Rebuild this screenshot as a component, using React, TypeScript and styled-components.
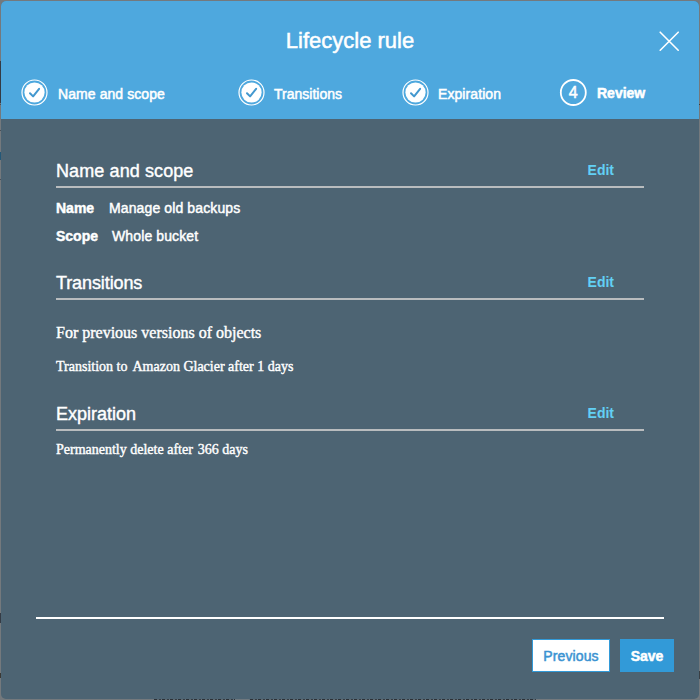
import React from "react";
import styled, { createGlobalStyle } from "styled-components";

const Global = createGlobalStyle`
  * { box-sizing: border-box; }
  html, body { margin: 0; padding: 0; }
  body { width: 700px; height: 700px; overflow: hidden; background: #74797d; }
`;

const Backdrop = styled.div`
  width: 700px;
  height: 700px;
  padding: 1px;
  font-family: "Liberation Sans", Arial, sans-serif;
  color: #fff;
  background:
    linear-gradient(#343b45, #343b45) 0 61px / 1px 42px no-repeat,
    linear-gradient(#4a5058, #4a5058) 0 104px / 1px 1px no-repeat,
    linear-gradient(#4a5058, #4a5058) 0 130px / 1px 1px no-repeat,
    linear-gradient(#235878, #235878) 0 152px / 1px 8px no-repeat,
    linear-gradient(#4a5058, #4a5058) 0 179px / 1px 1px no-repeat,
    linear-gradient(#343b45, #343b45) 0 613px / 1px 10px no-repeat,
    linear-gradient(#3a3834, #3a3834) 0 673px / 1px 5px no-repeat,
    linear-gradient(#363b40, #363b40) 699px 104px / 1px 1px no-repeat,
    linear-gradient(#3a3f44, #3a3f44) 699px 671px / 1px 8px no-repeat,
    linear-gradient(#6f787e, #6f787e) 235px 699px / 14px 1px no-repeat,
    repeating-linear-gradient(90deg, #2c3137 0 3px, #5d686f 3px 5px, #353c43 5px 7px, #64717a 7px 8px) 154px 699px / 382px 1px no-repeat,
    #74797d;
`;

const Dialog = styled.section`
  width: 698px;
  height: 698px;
  display: flex;
  flex-direction: column;
  border-radius: 5px;
  overflow: hidden;
  background: #4d6473;
`;

const Header = styled.header`
  height: 118px;
  flex: none;
  background: #4ea8de;
`;

const TitleBar = styled.div`
  height: 78px;
  padding-top: 2px;
  display: grid;
  grid-template-columns: 60px 1fr 60px;
  align-items: center;
  justify-items: center;
`;

const Title = styled.h1`
  grid-column: 2;
  margin: 0;
  font-size: 22px;
  line-height: 26px;
  font-weight: 400;
  -webkit-text-stroke: 0.5px #fff;
`;

const CloseButton = styled.button`
  display: flex;
  width: 22px;
  height: 22px;
  padding: 0;
  border: 0;
  background: none;
`;

const Steps = styled.ol`
  display: grid;
  grid-template-columns: 217px 164px 157px 1fr;
  margin: 0;
  padding: 0 0 0 20px;
  list-style: none;
`;

const Step = styled.li`
  display: flex;
  align-items: center;
  height: 28px;
`;

const Label = styled.span<{ $gap: number; $space?: number }>`
  margin-left: ${(p) => p.$gap}px;
  padding-top: 2px;
  font-size: 14px;
  letter-spacing: ${(p) => p.$space ?? 0}px;
  -webkit-text-stroke: 0.5px #fff;
  white-space: nowrap;
`;

const CurrentLabel = styled(Label)`
  padding-top: 0;
  font-weight: 700;
`;

const Body = styled.main`
  flex: 1;
  padding: 39px 55px 0;
`;

const SectionHead = styled.div`
  display: flex;
  justify-content: space-between;
  height: 30px;
  padding-right: 30px;
  border-bottom: 2px solid #b9bcbe;
`;

const Heading = styled.h2<{ $space?: number }>`
  margin: 0;
  font-size: 18px;
  line-height: 26px;
  font-weight: 400;
  letter-spacing: ${(p) => p.$space ?? 0}px;
  -webkit-text-stroke: 0.4px #fff;
`;

const Edit = styled.a`
  font-size: 14px;
  line-height: 24px;
  font-weight: 700;
  color: #62d0f5;
`;

const Group = styled.section<{ $height: number }>`
  height: ${(p) => p.$height}px;
`;

const Field = styled.p<{ $top: number }>`
  display: flex;
  margin: ${(p) => p.$top}px 0 0;
  font-size: 14px;
  line-height: 20px;
  -webkit-text-stroke: 0.45px #fff;
`;

const Key = styled.b<{ $width: number }>`
  width: ${(p) => p.$width}px;
`;

const Value = styled.span`
  letter-spacing: 0.12px;
`;

const Serif = styled.p<{ $size: number; $top: number }>`
  display: flex;
  margin: ${(p) => p.$top}px 0 0;
  font-family: "Liberation Serif", "Times New Roman", serif;
  font-size: ${(p) => p.$size}px;
  line-height: 20px;
  -webkit-text-stroke: 0.4px #fff;
`;

const Detail = styled.span<{ $gap?: number }>`
  margin-left: ${(p) => p.$gap ?? 0}px;
`;

const Footer = styled.footer`
  height: 82px;
  flex: none;
  margin: 0 35px;
  border-top: 2px solid #fff;
`;

const Actions = styled.div`
  display: flex;
  justify-content: flex-end;
  gap: 10px;
  margin: 20px -10px 0 0;
`;

const Button = styled.button<{ $primary?: boolean }>`
  width: ${(p) => (p.$primary ? 54 : 78)}px;
  height: 33px;
  padding: 0;
  border: 1px solid #329ad8;
  background: ${(p) => (p.$primary ? "#329ad8" : "#fff")};
  color: ${(p) => (p.$primary ? "#fff" : "#3b93d2")};
  font: ${(p) => (p.$primary ? 700 : 400)} 14px "Liberation Sans", Arial, sans-serif;
  letter-spacing: ${(p) => (p.$primary ? 0 : 0.1)}px;
  -webkit-text-stroke: 0.5px currentColor;
`;

function DoneIcon() {
  return (
    <svg width="28" height="28" viewBox="0 0 28 28">
      <circle cx="13.5" cy="13.5" r="12.5" fill="none" stroke="#fff" strokeWidth="1.2" />
      <circle cx="13.5" cy="13.5" r="10.1" fill="#fff" />
      <path d="M9 14.2l3.1 3.2 6-7.6" fill="none" stroke="#4398cf" strokeWidth="2" strokeLinecap="round" strokeLinejoin="round" />
    </svg>
  );
}

function NumberIcon() {
  return (
    <svg width="28" height="28" viewBox="0 0 28 28">
      <circle cx="14.3" cy="13.5" r="12.5" fill="none" stroke="#fff" strokeWidth="1.8" />
      <text x="14.3" y="19.3" fontSize="16" textAnchor="middle" fill="#fff" stroke="#fff" strokeWidth="0.5">4</text>
    </svg>
  );
}

export default function App() {
  return (
    <>
      <Global />
      <Backdrop>
        <Dialog>
          <Header>
            <TitleBar>
              <Title>Lifecycle rule</Title>
              <CloseButton aria-label="Close">
                <svg width="22" height="22" viewBox="0 0 22 22">
                  <path d="M2.2 2.2l18 18M20.2 2.2l-18 18" stroke="#fff" strokeWidth="1.6" strokeLinecap="round" />
                </svg>
              </CloseButton>
            </TitleBar>
            <Steps>
              <Step><DoneIcon /><Label $gap={9} $space={0.08}>Name and scope</Label></Step>
              <Step><DoneIcon /><Label $gap={8}>Transitions</Label></Step>
              <Step><DoneIcon /><Label $gap={8} $space={0.08}>Expiration</Label></Step>
              <Step><NumberIcon /><CurrentLabel $gap={10}>Review</CurrentLabel></Step>
            </Steps>
          </Header>
          <Body>
            <Group $height={112}>
              <SectionHead><Heading $space={0.1}>Name and scope</Heading><Edit>Edit</Edit></SectionHead>
              <Field $top={10}><Key $width={53}>Name</Key><Value>Manage old backups</Value></Field>
              <Field $top={8}><Key $width={56}>Scope</Key><Value>Whole bucket</Value></Field>
            </Group>
            <Group $height={131}>
              <SectionHead><Heading $space={-0.1}>Transitions</Heading><Edit>Edit</Edit></SectionHead>
              <Serif $size={16} $top={23}>For previous versions of objects</Serif>
              <Serif $size={14} $top={14}><Detail>Transition to</Detail><Detail $gap={5}>Amazon Glacier after 1 days</Detail></Serif>
            </Group>
            <Group $height={70}>
              <SectionHead><Heading>Expiration</Heading><Edit>Edit</Edit></SectionHead>
              <Serif $size={14} $top={9}><Detail>Permanently delete after</Detail><Detail $gap={5}>366 days</Detail></Serif>
            </Group>
          </Body>
          <Footer>
            <Actions><Button>Previous</Button><Button $primary>Save</Button></Actions>
          </Footer>
        </Dialog>
      </Backdrop>
    </>
  );
}
